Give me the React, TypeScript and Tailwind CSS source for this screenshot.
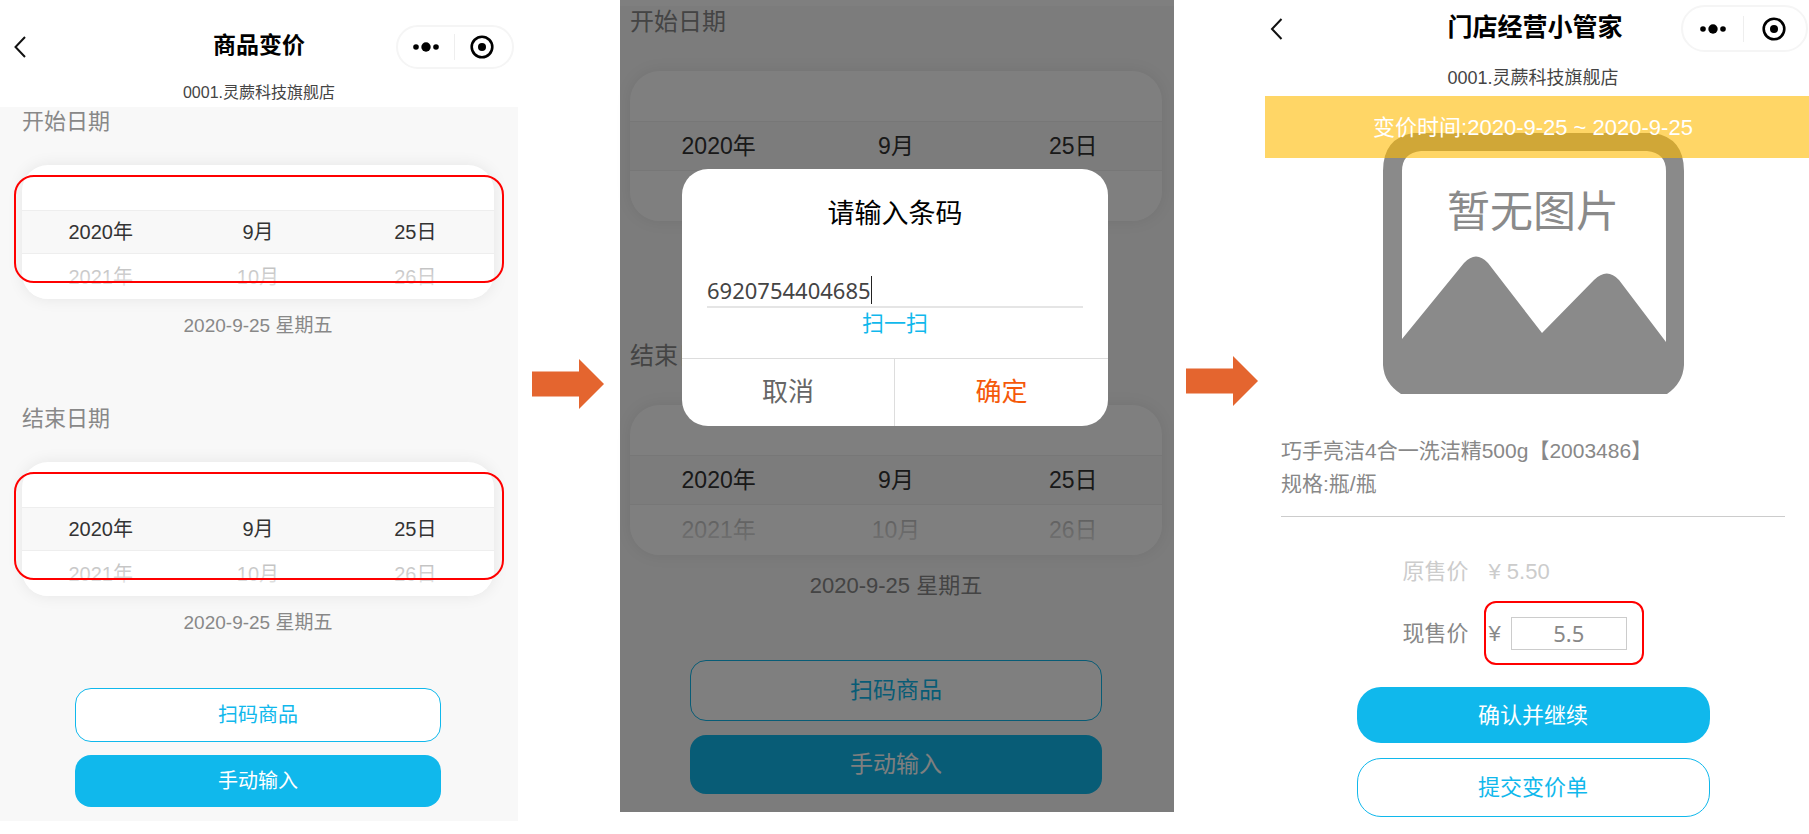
import { useId } from "react";
import clsx from "clsx";

type Size = "sm" | "lg";

const WHEELS = [
  { label: "年", current: "2020年", next: "2021年" },
  { label: "月", current: "9月", next: "10月" },
  { label: "日", current: "25日", next: "26日" },
];

function BackIcon({ className }: { className: string }) {
  return (
    <svg viewBox="0 0 12 22" fill="none" stroke="#111" strokeWidth="2" className={className}>
      <path d="M11 1 L1.5 11 L11 21" />
    </svg>
  );
}

function Capsule({ size }: { size: Size }) {
  return (
    <div
      className={clsx(
        "flex items-center justify-self-end rounded-full border-2 border-[#f5f5f5] pr-[2px]",
        size === "sm" ? "h-11 w-[118px]" : "h-[47px] w-[127px]",
      )}
    >
      <button type="button" aria-label="更多" className="flex flex-1 justify-center">
        <svg viewBox="0 0 26 10" className="h-[10px] w-[26px]">
          <circle cx="3" cy="5" r="2.8" />
          <circle cx="13" cy="5" r="4.7" />
          <circle cx="23" cy="5" r="2.8" />
        </svg>
      </button>
      <span className="h-[26px] w-px bg-[#eeeeee]" />
      <button type="button" aria-label="关闭" className="flex flex-1 justify-center">
        <svg viewBox="0 0 24 24" className="size-6">
          <circle cx="12" cy="12" r="10.3" fill="none" stroke="#000" strokeWidth="2.6" />
          <circle cx="12" cy="12" r="4" />
        </svg>
      </button>
    </div>
  );
}

function Arrow({ className }: { className: string }) {
  return (
    <div className={clsx("flex justify-center", className)}>
      <svg viewBox="0 0 72 50" className="h-[50px] w-[72px]">
        <path d="M0 12.5 H47 V0 L72 25 L47 50 V37.5 H0 Z" fill="#e4652f" />
      </svg>
    </div>
  );
}

type SectionProps = {
  size: Size;
  marked?: boolean;
  // part of the section lies under the dialog
  covered?: boolean;
};

function DatePicker({ size, marked, covered }: SectionProps) {
  const row = size === "sm" ? "h-[45px] text-[20px]" : "h-[50px] text-[23px]";

  return (
    <div className="relative">
      <div
        className={clsx(
          "overflow-hidden bg-white text-[#333] shadow-[0_0_16px_rgba(0,0,0,0.08)]",
          size === "sm" ? "rounded-[26px]" : "rounded-[30px]",
        )}
      >
        <div className={row} />
        <div
          className={clsx(
            "grid grid-cols-3 items-center border-y border-[#eeeeee] bg-[#f8f8f8] text-center",
            size === "sm" ? "h-11 text-[20px]" : "h-[50px] text-[23px]",
          )}
        >
          {WHEELS.map((wheel) => (
            <span key={wheel.label}>{wheel.current}</span>
          ))}
        </div>
        <div className={clsx("relative grid grid-cols-3 items-center text-center", row)}>
          {!covered && WHEELS.map((wheel) => <span key={wheel.label}>{wheel.next}</span>)}
          <div className="absolute inset-0 bg-linear-to-b from-white/60 to-white/95" />
        </div>
      </div>
      {marked && (
        <div className="pointer-events-none absolute top-[10px] -right-[10px] -left-2 h-[108px] rounded-[20px] border-2 border-[#f00]" />
      )}
    </div>
  );
}

function DateSection({ title, size, marked, covered }: SectionProps & { title: string }) {
  const sm = size === "sm";

  return (
    <section>
      <h2
        className={clsx(
          "text-[#888]",
          sm ? "mb-7 text-[22px] leading-[30px]" : "mb-[33px] text-[24px] leading-8",
        )}
      >
        {title}
      </h2>
      <DatePicker size={size} marked={marked} covered={covered} />
      <p
        className={clsx(
          "text-center text-[#888]",
          sm ? "mt-[13px] h-7 text-[19px] leading-7" : "mt-[15px] h-8 text-[22px] leading-8",
        )}
      >
        {!covered && "2020-9-25 星期五"}
      </p>
    </section>
  );
}

function DateForm({ size, marked, covered }: SectionProps) {
  const sm = size === "sm";

  return (
    <div className={clsx("bg-[#f8f8f8]", sm ? "pr-6 pb-[14px] pl-[22px]" : "pr-3 pb-[18px] pl-[10px]")}>
      <div className={clsx("flex flex-col", sm ? "gap-16" : "gap-[72px]")}>
        <DateSection title="开始日期" size={size} marked={marked} covered={covered} />
        <DateSection title="结束日期" size={size} marked={marked} />
      </div>
      <div
        className={clsx(
          "flex flex-col",
          sm ? "mx-[53px] mt-[51px] gap-[13px] text-[20px]" : "mx-[60px] mt-[58px] gap-[14px] text-[23px]",
        )}
      >
        <button
          type="button"
          className={clsx(
            "rounded-2xl border border-[#10b8ec] bg-white text-[#10b8ec]",
            sm ? "h-[54px]" : "h-[61px]",
          )}
        >
          扫码商品
        </button>
        <button
          type="button"
          className={clsx("rounded-2xl bg-[#10b8ec] text-white", sm ? "h-[52px]" : "h-[59px]")}
        >
          手动输入
        </button>
      </div>
    </div>
  );
}

function BarcodeDialog() {
  const id = useId();

  return (
    <div className="absolute inset-0 flex items-start justify-center bg-black/50 pt-[169px] pr-[14px] pl-[10px]">
      <div role="dialog" aria-labelledby={`${id}-title`} className="w-[426px] overflow-hidden rounded-[26px] bg-white">
        <h2 id={`${id}-title`} className="pt-[27px] text-center text-[27px] leading-9 text-black">
          请输入条码
        </h2>
        <div className="mx-[25px] mt-[42px] flex h-[34px] items-center border-b-2 border-[#e5e5e5]">
          <input
            aria-labelledby={`${id}-title`}
            defaultValue="6920754404685"
            className="field-sizing-content font-['Noto_Sans'] text-[22px] leading-7 text-[#444] caret-transparent outline-none"
          />
          <span className="h-7 w-px bg-[#222]" />
        </div>
        <button type="button" className="mx-auto block text-[22px] leading-8 text-[#10b8ec]">
          扫一扫
        </button>
        <div className="mt-[18px] grid h-[68px] grid-cols-2 border-t border-[#dddddd] text-[26px]">
          <button type="button" className="border-r border-[#dddddd] text-[#666]">
            取消
          </button>
          <button type="button" className="text-[#f5590a]">
            确定
          </button>
        </div>
      </div>
    </div>
  );
}

function NoPicture() {
  return (
    <svg viewBox="0 0 301 261" className="h-[261px] w-[301px]" role="img" aria-label="暂无图片">
      <path
        fill="#8a8a8a"
        fillRule="evenodd"
        d="M30 0 H271 Q301 5 301 38 V232 Q300 250 284 261 H18 Q1 250 0 232 V38 Q0 5 30 0 Z
           M38 18 Q19 20 19 38 V206 L81 130 Q93 117 105 130 L159 200 L211 147 Q224 134 236 147 L283 209 V38 Q283 20 264 18 Z"
      />
      <text
        x="150"
        y="94"
        textAnchor="middle"
        fill="#8a8a8a"
        className="font-['Noto_Sans_CJK_SC',sans-serif] text-[43px]"
      >
        暂无图片
      </text>
    </svg>
  );
}

function PriceScreen() {
  return (
    <div className="bg-white pb-[17px]">
      <header className="grid grid-cols-[1fr_auto_1fr] items-center pt-[5px] pr-px pl-[5px]">
        <button type="button" aria-label="返回">
          <BackIcon className="h-[22px] w-[13px]" />
        </button>
        <h1 className="pr-2 pb-1 text-[25px] leading-9 font-bold text-black">门店经营小管家</h1>
        <Capsule size="lg" />
      </header>
      <p className="mt-3 pr-2 pb-1 text-center text-[18px] leading-7 text-[#444]">0001.灵蕨科技旗舰店</p>

      <p className="relative z-10 bg-[#ffbb00]/60 pt-[2px] pr-2 text-center text-[22px] leading-[60px] text-white">
        变价时间:2020-9-25 ~ 2020-9-25
      </p>
      <div className="-mt-[25px] flex justify-center pr-2">
        <NoPicture />
      </div>

      <div className="mr-6 ml-4 border-b border-[#cccccc] pt-10 pb-4 text-[21px] leading-[33px] text-[#888]">
        <p>巧手亮洁4合一洗洁精500g【2003486】</p>
        <p>规格:瓶/瓶</p>
      </div>

      <div className="pr-2 text-[22px] text-[#888]">
        <div className="mx-auto mt-[39px] w-[261px]">
          <div className="flex gap-5 leading-8 text-[#cccccc]">
            <span>原售价</span>
            <span>¥ 5.50</span>
          </div>
          <div className="mt-[13px] flex items-center gap-[15px]">
            <label htmlFor="price">现售价</label>
            <div className="flex h-16 w-40 items-center gap-[10px] rounded-xl border-2 border-[#f00] pl-[3px]">
              <span>¥</span>
              <input
                id="price"
                defaultValue="5.5"
                className="h-[33px] w-[116px] border border-[#cccccc] text-center font-['Noto_Sans'] outline-none"
              />
            </div>
          </div>
        </div>
        <div className="mx-auto mt-[22px] flex w-[353px] flex-col gap-[15px]">
          <button type="button" className="h-14 rounded-3xl bg-[#10b8ec] text-white">
            确认并继续
          </button>
          <button type="button" className="h-[59px] rounded-3xl border border-[#10b8ec] bg-white text-[#10b8ec]">
            提交变价单
          </button>
        </div>
      </div>
    </div>
  );
}

export default function App() {
  return (
    <main className="grid grid-cols-[518fr_102fr_554fr_91fr_544fr] items-start bg-white font-['Liberation_Sans','Noto_Sans_CJK_SC',sans-serif]">
      <div>
        <header className="grid grid-cols-[1fr_auto_1fr] items-center px-1 pt-[25px]">
          <button type="button" aria-label="返回" className="pl-[10px]">
            <BackIcon className="h-[22px] w-[12px]" />
          </button>
          <h1 className="pb-1 text-[23px] leading-9 font-bold text-black">商品变价</h1>
          <Capsule size="sm" />
        </header>
        <p className="mt-[10px] text-center text-[16px] leading-7 text-[#444]">0001.灵蕨科技旗舰店</p>
        <DateForm size="sm" marked />
      </div>

      <Arrow className="pt-[359px] pr-[2px]" />

      <div className="relative">
        <div className="h-[6px] bg-white" />
        <DateForm size="lg" covered />
        <BarcodeDialog />
      </div>

      <Arrow className="pt-[356px] pl-1" />

      <PriceScreen />
    </main>
  );
}
